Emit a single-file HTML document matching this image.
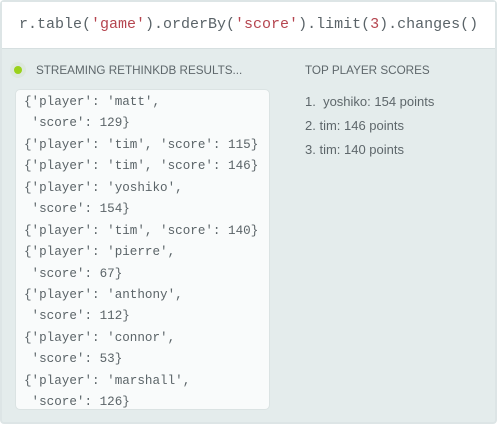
<!DOCTYPE html>
<html><head><style>
body{margin:0;width:497px;height:424px;background:#fff;overflow:hidden;font-family:"Liberation Sans",sans-serif}
.outer{position:absolute;left:0;top:0;width:493px;height:420px;border:2px solid #dde5e6;border-radius:4px;background:#e4ecec}
.top{position:absolute;left:0;top:0;width:493px;height:46px;background:#fff;border-bottom:1px solid #d6dfe0}
.q{position:absolute;left:17px;top:12px;font:15px/22px "Liberation Mono",monospace;color:#5a6368;white-space:pre;letter-spacing:0}
.s{color:#b5454f}
.dot{position:absolute;left:14px;top:66px;width:8px;height:8px;border-radius:50%;background:#9ad21b;box-shadow:0 0 0 4px #dde8de}
.h{position:absolute;font-size:11.7px;color:#5e676b;top:64px;letter-spacing:0}
.code{position:absolute;left:15px;top:89px;width:255px;height:321px;background:#f9fbfb;border:1px solid #dbe3e3;border-radius:5px;box-sizing:border-box;padding:2px 0 0 8px;font:12.6px/21.43px "Liberation Mono",monospace;color:#5b6468;white-space:pre;overflow:hidden}
ol{position:absolute;left:305px;top:90px;margin:0;padding:0;list-style:none;font-size:13px;line-height:24px;color:#5e676b}
</style></head><body>
<div class="outer">
<div class="top"><div class="q">r.table(<span class="s">'game'</span>).orderBy(<span class="s">'score'</span>).limit(<span class="s">3</span>).changes()</div></div>
</div>
<div class="dot"></div>
<div class="h" style="left:36px">STREAMING RETHINKDB RESULTS...</div>
<div class="h" style="left:305px">TOP PLAYER SCORES</div>
<div class="code">{'player': 'matt',
 'score': 129}
{'player': 'tim', 'score': 115}
{'player': 'tim', 'score': 146}
{'player': 'yoshiko',
 'score': 154}
{'player': 'tim', 'score': 140}
{'player': 'pierre',
 'score': 67}
{'player': 'anthony',
 'score': 112}
{'player': 'connor',
 'score': 53}
{'player': 'marshall',
 'score': 126}</div>
<ol><li>1.&nbsp; yoshiko: 154 points</li><li>2. tim: 146 points</li><li>3. tim: 140 points</li></ol>
</body></html>
